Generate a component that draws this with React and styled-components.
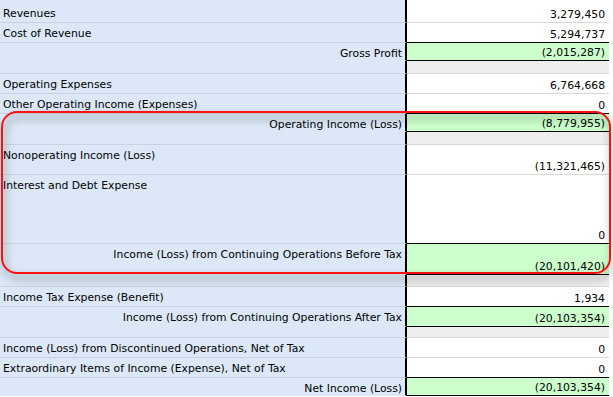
import styled, { createGlobalStyle } from 'styled-components';

const GlobalStyle = createGlobalStyle`
  html, body {
    margin: 0;
    padding: 0;
    background: #ffffff;
  }
  body {
    font-family: 'DejaVu Sans', Verdana, sans-serif;
    font-size: 10.8px;
    color: #000000;
  }
`;

const rows = [
  { h: 3 },
  { h: 20, label: 'Revenues', value: '3,279,450' },
  { h: 20, label: 'Cost of Revenue', value: '5,294,737', dark: true },
  { h: 18, label: 'Gross Profit', value: '(2,015,287)', total: true, dark: true },
  { h: 13, spacer: true },
  { h: 20, label: 'Operating Expenses', value: '6,764,668' },
  { h: 20, label: 'Other Operating Income (Expenses)', value: '0', dark: true },
  { h: 18, label: 'Operating Income (Loss)', value: '(8,779,955)', total: true, dark: true },
  { h: 13, spacer: true },
  { h: 30, label: 'Nonoperating Income (Loss)', value: '(11,321,465)' },
  { h: 69, label: 'Interest and Debt Expense', value: '0', dark: true },
  { h: 31, label: 'Income (Loss) from Continuing Operations Before Tax', value: '(20,101,420)', total: true, dark: true },
  { h: 12, spacer: true },
  { h: 20, label: 'Income Tax Expense (Benefit)', value: '1,934', dark: true },
  { h: 20, label: 'Income (Loss) from Continuing Operations After Tax', value: '(20,103,354)', total: true, dark: true },
  { h: 11, spacer: true },
  { h: 20, label: 'Income (Loss) from Discontinued Operations, Net of Tax', value: '0' },
  { h: 20, label: 'Extraordinary Items of Income (Expense), Net of Tax', value: '0', dark: true },
  { h: 18, label: 'Net Income (Loss)', value: '(20,103,354)', total: true, dark: true },
];

export default function App() {
  return (
    <>
      <GlobalStyle />
      <Sheet>
        {rows.map((r, i) => (
          <Row key={i} $h={r.h}>
            <LabelCell $total={r.total}>{r.label}</LabelCell>
            <ValueCell $total={r.total} $spacer={r.spacer} $dark={r.dark}>
              {r.value}
            </ValueCell>
            <Margin />
          </Row>
        ))}
        <Highlight />
      </Sheet>
    </>
  );
}

const Sheet = styled.div`
  position: relative;
  width: 613px;
  height: 397px;
  overflow: hidden;
  display: flex;
  flex-direction: column;
`;

const Row = styled.div`
  display: grid;
  grid-template-columns: 407px 202px 4px;
  height: ${({ $h }) => $h}px;
  flex-shrink: 0;
`;

const LabelCell = styled.div`
  box-sizing: border-box;
  background: #dce8f7;
  border-right: 2px solid #000000;
  border-bottom: 1px solid ${({ $total }) => ($total ? '#dce8f7' : '#c9d3df')};
  padding: 5px 3px 0 3px;
  line-height: 12px;
  white-space: nowrap;
  overflow: hidden;
  text-align: ${({ $total }) => ($total ? 'right' : 'left')};
`;

const ValueCell = styled.div`
  box-sizing: border-box;
  background: ${({ $total, $spacer }) => ($total ? '#ccffcc' : $spacer ? '#eeeeee' : '#ffffff')};
  border-bottom: 1px solid ${({ $dark }) => ($dark ? '#000000' : '#d8d8d8')};
  display: flex;
  align-items: flex-end;
  justify-content: flex-end;
  padding: 0 4px 1px 0;
  line-height: 12px;
  white-space: nowrap;
`;

const Margin = styled.div`
  background: #ffffff;
`;

const Highlight = styled.div`
  position: absolute;
  left: 1px;
  top: 111px;
  width: 610px;
  height: 163px;
  box-sizing: border-box;
  border: 2px solid #ff1010;
  border-radius: 16px;
  filter: drop-shadow(2px 5px 4px rgba(0, 0, 0, 0.55));
  pointer-events: none;
`;
